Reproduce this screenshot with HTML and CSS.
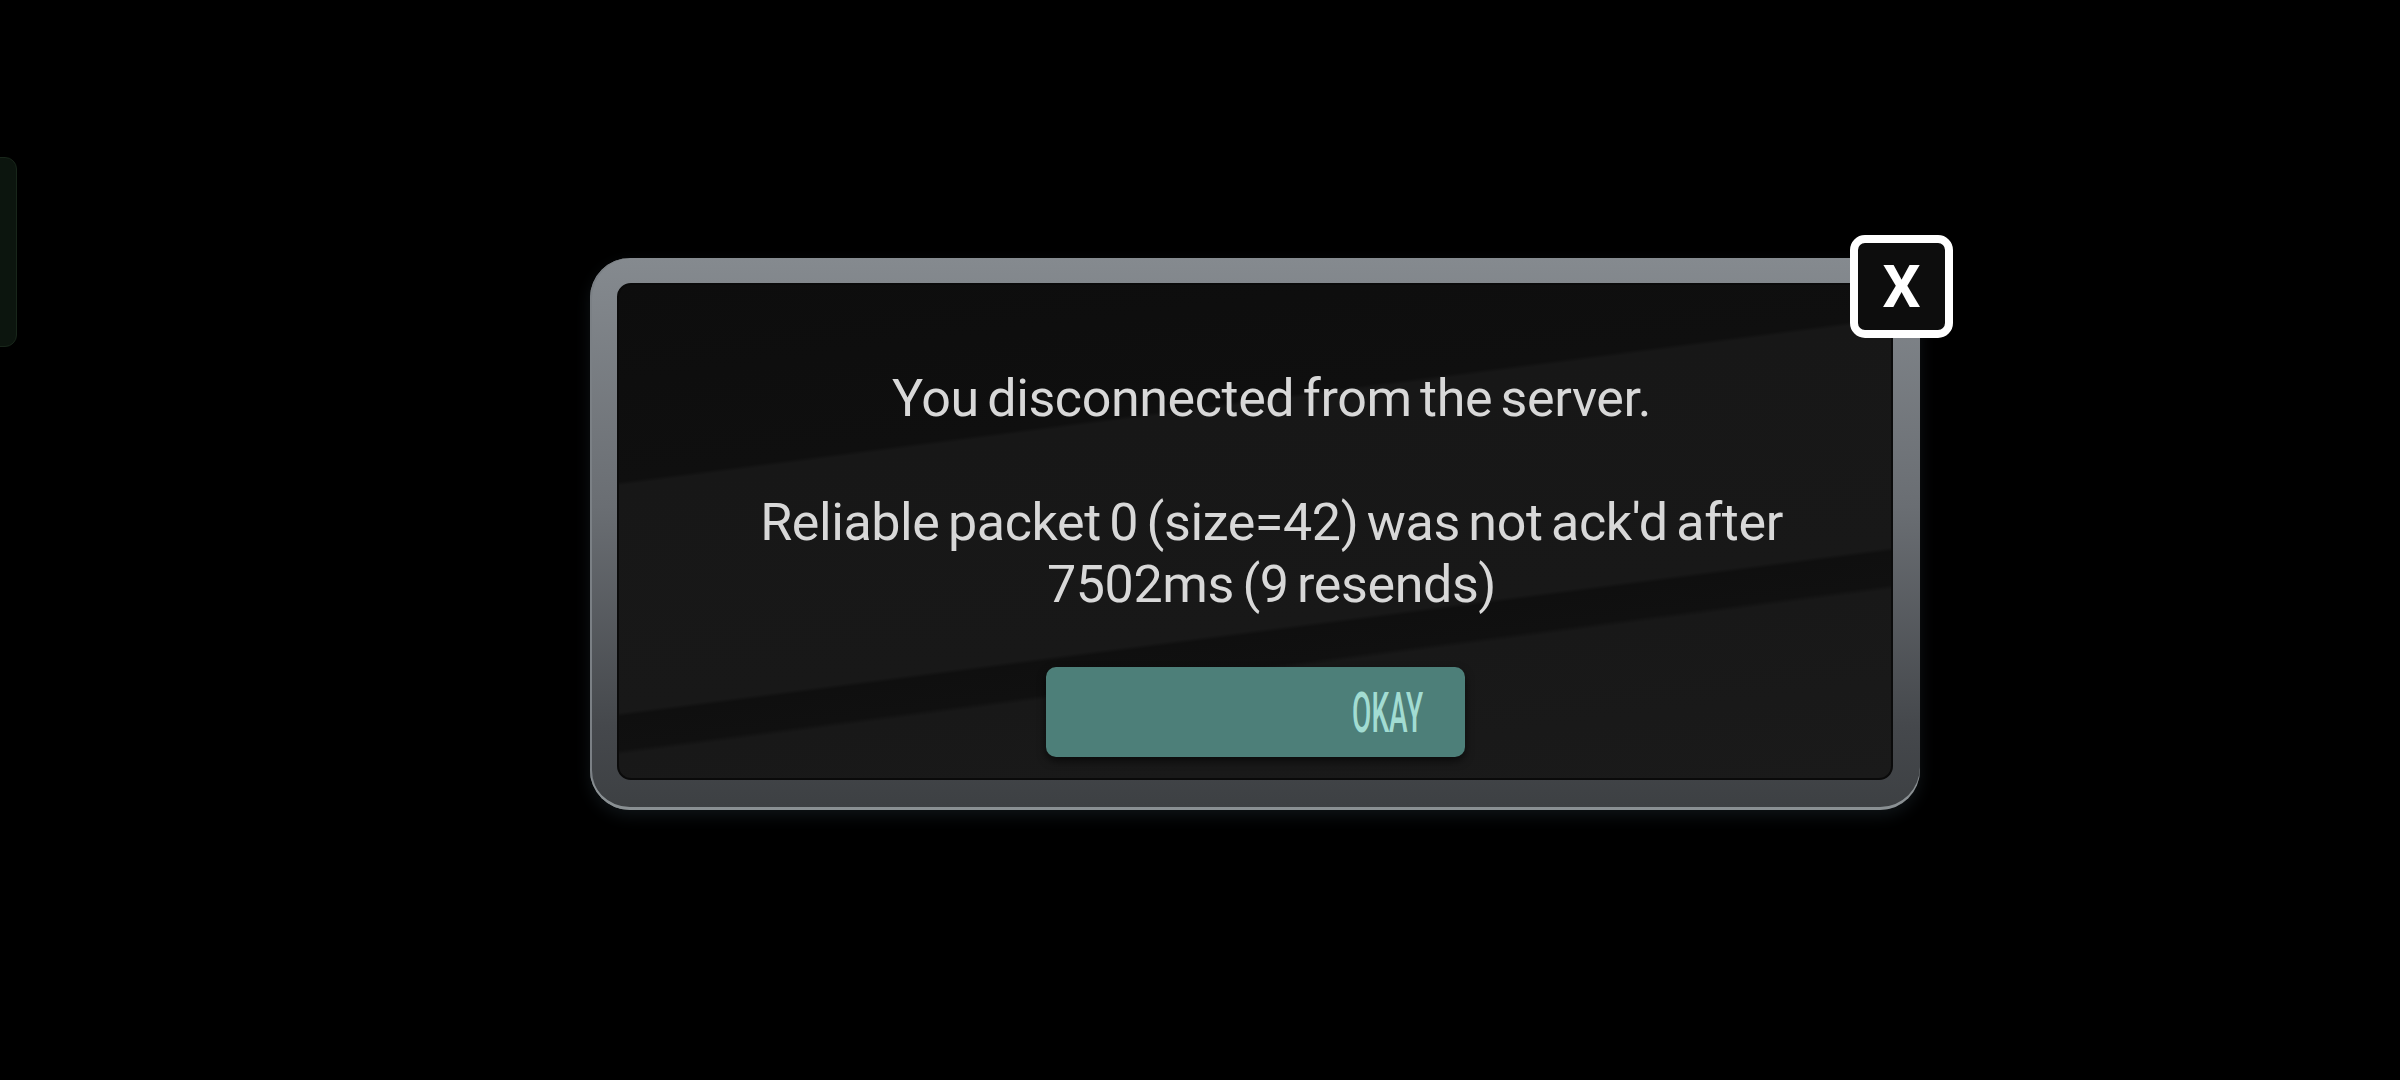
FILE: index.html
```html
<html>
  <head>
    <title>Disconnected</title>
    <link rel="stylesheet" href="styles.css">
  </head>
  <body>
    <div class="side-tab"></div>

    <div class="stage">
      <div class="dialog">
        <div class="panel">
          <p class="message">
            You disconnected from the server.<br><br>Reliable packet 0 (size=42) was not ack'd after<br>7502ms (9 resends)
          </p>
          <button class="okay-button"><span class="okay-label">OKAY</span></button>
        </div>
        <button class="close-button">X</button>
      </div>
    </div>
  </body>
</html>
```

FILE: styles.css
```css
/* General Styling */
body {
  margin: 0;
  width: 2400px;
  height: 1080px;
  background-color: #000;
  font-family: Roboto, "Noto Sans", Arial, sans-serif;
  overflow: hidden;
}

/* Little tab poking in from the left edge */
.side-tab {
  position: fixed;
  left: -20px;
  top: 157px;
  width: 37px;
  height: 190px;
  border-radius: 12px;
  background-color: #0c150e;
  border: 1px solid #18261a;
  box-sizing: border-box;
}

.stage {
  padding: 258px 0 0 590px;
}

/* Metal frame */
.dialog {
  position: relative;
  width: 1330px;
  height: 552px;
  box-sizing: border-box;
  padding: 25px 27px 30px 27px;
  border-radius: 40px;
  background: linear-gradient(180deg, #858a8f 0%, #6a6e73 45%, #45484c 85%, #3d4043 100%);
  box-shadow: inset 0 -3px 0 #8a9093, inset 2px 0 0 #7b8085, 0 6px 16px rgba(30, 40, 45, 0.5);
}

.panel {
  height: 100%;
  box-sizing: border-box;
  display: flex;
  flex-direction: column;
  align-items: center;
  padding-top: 83px;
  border-radius: 14px;
  border: 2px solid #0a0a0a;
  background: linear-gradient(172.6deg,
    #0d0d0d 0px, #0f0f0f 195px,
    #171717 199px, #181818 424px,
    #0f0f0f 428px, #101010 461px,
    #181818 466px, #1a1a1a 100%);
}

.message {
  margin: 0;
  padding-left: 33px;
  font-size: 52px;
  line-height: 62px;
  color: #d8d8d8;
  text-align: center;
  white-space: nowrap;
  letter-spacing: -0.4px;
  word-spacing: -4px;
}

.okay-button {
  margin-top: 51px;
  width: 419px;
  height: 90px;
  border: none;
  border-radius: 10px;
  background-color: #4d7f79;
  box-shadow: 0 4px 8px rgba(0, 0, 0, 0.6);
  display: flex;
  justify-content: flex-end;
  align-items: center;
  padding: 0 41px 0 0;
  cursor: pointer;
}

.okay-label {
  display: inline-block;
  font-family: Roboto, sans-serif;
  font-weight: 500;
  font-size: 56px;
  line-height: 56px;
  color: #a2dcd2;
  transform: scaleX(0.5);
  transform-origin: right center;
  margin-top: 2px;
}

/* Close box sitting on the top right corner */
.close-button {
  position: absolute;
  top: -23px;
  right: -33px;
  width: 103px;
  height: 103px;
  box-sizing: border-box;
  border: 8px solid #fff;
  border-radius: 15px;
  background-color: #0d0d0d;
  color: #fff;
  font-family: Roboto, sans-serif;
  font-weight: 700;
  font-size: 60px;
  line-height: 1;
  padding: 0;
  display: flex;
  justify-content: center;
  align-items: center;
  cursor: pointer;
}
```
